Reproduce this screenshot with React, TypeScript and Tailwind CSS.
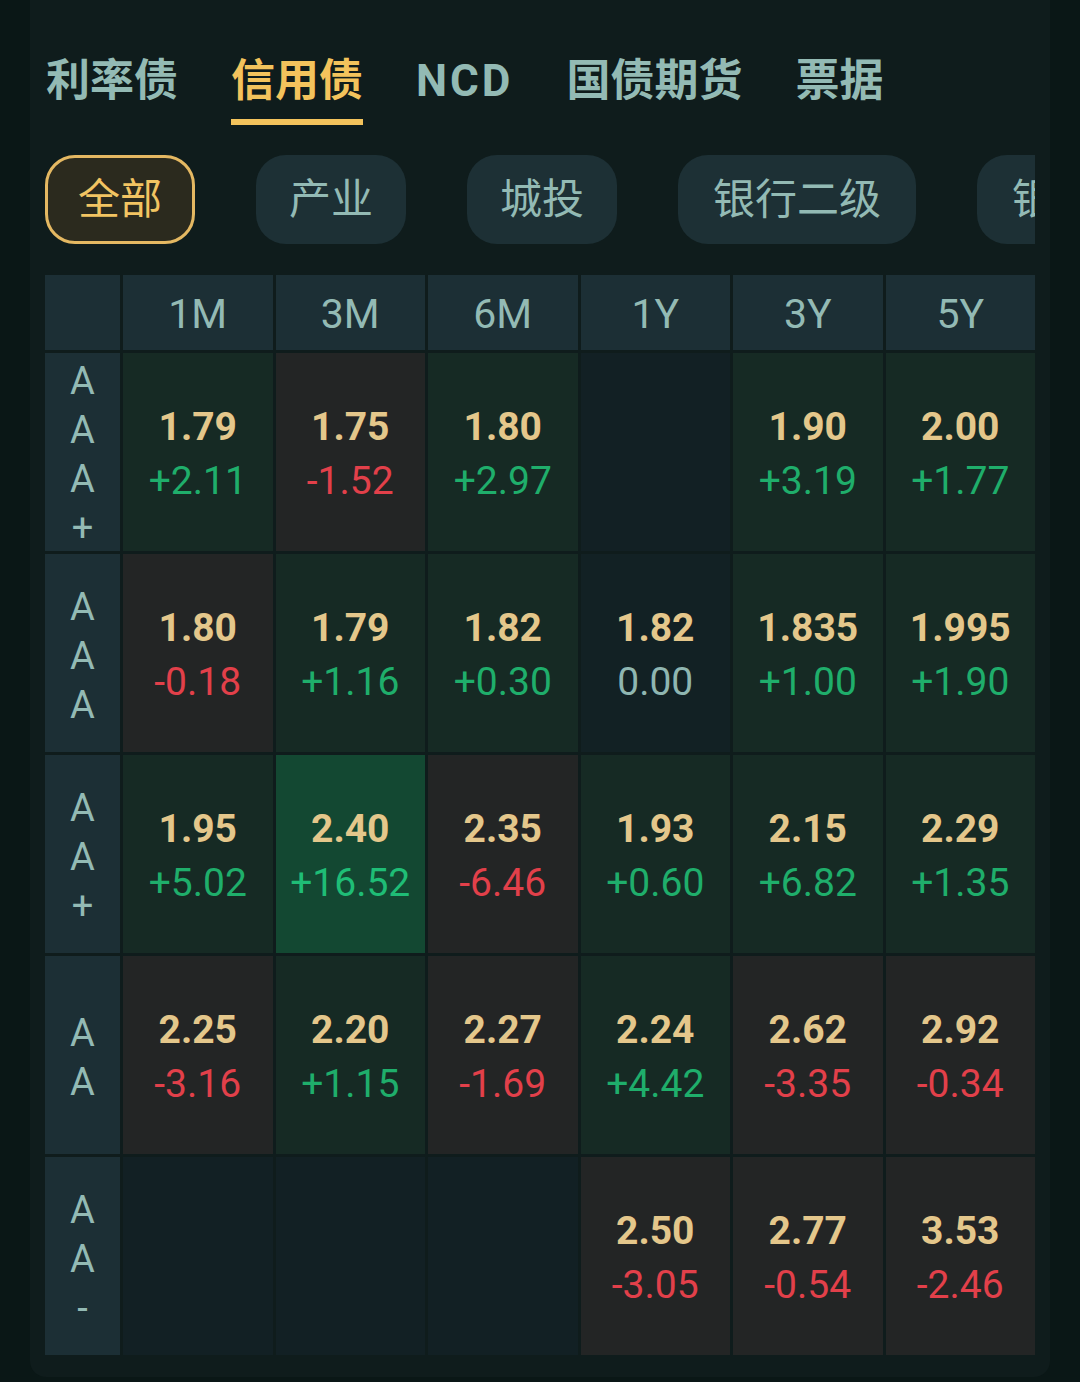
import React from "react";

type Tone = "up" | "down" | "flat" | "hot" | "none";

type Cell = {
  value?: string;
  change?: string;
  tone: Tone;
};

const tabs = ["利率债", "信用债", "NCD", "国债期货", "票据"];
const chips = ["全部", "产业", "城投", "银行二级", "银行永续"];
const terms = ["1M", "3M", "6M", "1Y", "3Y", "5Y"];

const rows: { rating: string[]; cells: Cell[] }[] = [
  {
    rating: ["A", "A", "A", "+"],
    cells: [
      { value: "1.79", change: "+2.11", tone: "up" },
      { value: "1.75", change: "-1.52", tone: "down" },
      { value: "1.80", change: "+2.97", tone: "up" },
      { tone: "none" },
      { value: "1.90", change: "+3.19", tone: "up" },
      { value: "2.00", change: "+1.77", tone: "up" },
    ],
  },
  {
    rating: ["A", "A", "A"],
    cells: [
      { value: "1.80", change: "-0.18", tone: "down" },
      { value: "1.79", change: "+1.16", tone: "up" },
      { value: "1.82", change: "+0.30", tone: "up" },
      { value: "1.82", change: "0.00", tone: "flat" },
      { value: "1.835", change: "+1.00", tone: "up" },
      { value: "1.995", change: "+1.90", tone: "up" },
    ],
  },
  {
    rating: ["A", "A", "+"],
    cells: [
      { value: "1.95", change: "+5.02", tone: "up" },
      { value: "2.40", change: "+16.52", tone: "hot" },
      { value: "2.35", change: "-6.46", tone: "down" },
      { value: "1.93", change: "+0.60", tone: "up" },
      { value: "2.15", change: "+6.82", tone: "up" },
      { value: "2.29", change: "+1.35", tone: "up" },
    ],
  },
  {
    rating: ["A", "A"],
    cells: [
      { value: "2.25", change: "-3.16", tone: "down" },
      { value: "2.20", change: "+1.15", tone: "up" },
      { value: "2.27", change: "-1.69", tone: "down" },
      { value: "2.24", change: "+4.42", tone: "up" },
      { value: "2.62", change: "-3.35", tone: "down" },
      { value: "2.92", change: "-0.34", tone: "down" },
    ],
  },
  {
    rating: ["A", "A", "-"],
    cells: [
      { tone: "none" },
      { tone: "none" },
      { tone: "none" },
      { value: "2.50", change: "-3.05", tone: "down" },
      { value: "2.77", change: "-0.54", tone: "down" },
      { value: "3.53", change: "-2.46", tone: "down" },
    ],
  },
];

const cellBg: Record<Tone, string> = {
  up: "bg-[#162a24]",
  down: "bg-[#232525]",
  flat: "bg-[#122124]",
  hot: "bg-[#134832]",
  none: "bg-[#122024]",
};

const changeColor: Record<Tone, string> = {
  up: "text-[#1fae6b]",
  hot: "text-[#1fbd76]",
  down: "text-[#e2404a]",
  flat: "text-[#8fb6b1]",
  none: "",
};

function RateCell({ cell }: { cell: Cell }) {
  return (
    <div className={`flex flex-col items-center justify-center pt-[4px] ${cellBg[cell.tone]}`}>
      {cell.value && (
        <>
          <span className="text-[39px] font-bold leading-[54px] text-[#e4c78b]">
            {cell.value}
          </span>
          <span className={`text-[39px] leading-[54px] ${changeColor[cell.tone]}`}>
            {cell.change}
          </span>
        </>
      )}
    </div>
  );
}

export default function App() {
  return (
    <div
      className="w-[1080px] h-[1382px] bg-[#0a1716] px-[30px] pb-[5px]"
      style={{ fontFamily: 'Roboto, "Noto Sans CJK SC", sans-serif' }}
    >
      <div className="h-full bg-[#0f1c1c] rounded-b-[16px] px-[15px] pt-[59px]">
        {/* TABS */}
        <div className="flex gap-[53px] pl-px">
          {tabs.map((t) => (
            <div key={t} className="flex flex-col">
              <span
                className={`text-[44px] font-bold leading-[44px] ${
                  t === "信用债" ? "text-[#f3c35c]" : "text-[#93bab4]"
                } ${t === "NCD" ? "tracking-[3px]" : ""}`}
              >
                {t}
              </span>
              <div
                className={`mt-[16px] h-[6px] ${
                  t === "信用债" ? "bg-[#f3c35c]" : "bg-transparent"
                }`}
              />
            </div>
          ))}
        </div>

        {/* CHIPS */}
        <div className="mt-[30px] flex gap-[61px] overflow-hidden w-[990px]">
          {chips.map((c, i) => (
            <div
              key={c}
              className={`shrink-0 h-[89px] rounded-[30px] border-[3px] flex items-center justify-center text-[42px] ${
                c.length > 2 ? "px-[32px]" : "px-[30px]"
              } ${
                i === 0
                  ? "border-[#e4b862] bg-[#2b2a1e] text-[#f2c462]"
                  : "border-transparent bg-[#1d3035] text-[#93bab4]"
              }`}
            >
              {c}
            </div>
          ))}
        </div>

        {/* TABLE */}
        <div className="mt-[31px] w-[990px] grid grid-cols-[75px_repeat(6,1fr)] grid-rows-[75px_repeat(5,198px)] gap-[3px]">
          <div className="bg-[#1c2f35]" />
          {terms.map((t) => (
            <div
              key={t}
              className="bg-[#1c2f35] flex items-center justify-center pt-[4px] text-[41px] text-[#93bab4]"
            >
              {t}
            </div>
          ))}
          {rows.map((r, ri) => (
            <React.Fragment key={ri}>
              <div className="bg-[#1c2f35] flex flex-col items-center justify-center pt-[6px] text-[38px] leading-[49px] text-[#93bab4]">
                {r.rating.map((ch, ci) => (
                  <span key={ci}>{ch}</span>
                ))}
              </div>
              {r.cells.map((cell, ci) => (
                <RateCell key={ci} cell={cell} />
              ))}
            </React.Fragment>
          ))}
        </div>
      </div>
    </div>
  );
}
